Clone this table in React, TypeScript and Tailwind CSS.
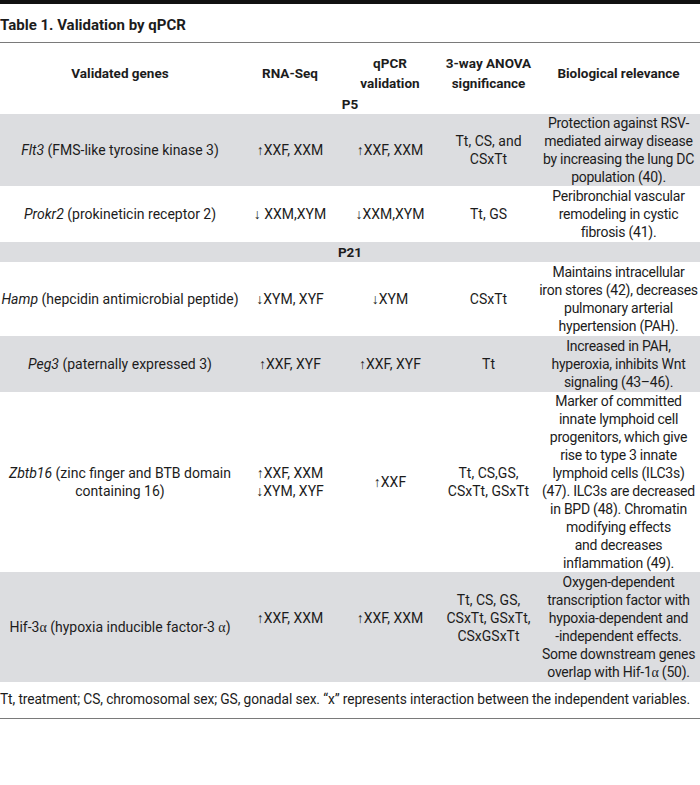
const rows: {
  kind: "row" | "group";
  gray: boolean;
  gene?: React.ReactNode;
  rna?: React.ReactNode;
  qpcr?: React.ReactNode;
  anova?: React.ReactNode;
  bio?: string[];
  label?: string;
  h?: string;
  lift?: boolean;
}[] = [
  {
    kind: "row",
    gray: true,
    h: "h-[72px]",
    gene: (
      <>
        <i>Flt3</i> (FMS-like tyrosine kinase 3)
      </>
    ),
    rna: "↑XXF, XXM",
    qpcr: "↑XXF, XXM",
    anova: (
      <>
        Tt, CS, and
        <br />
        CSxTt
      </>
    ),
    bio: ["Protection against RSV-", "mediated airway disease", "by increasing the lung DC", "population (40)."],
  },
  {
    kind: "row",
    gray: false,
    h: "h-[56px]",
    gene: (
      <>
        <i>Prokr2</i> (prokineticin receptor 2)
      </>
    ),
    rna: "↓ XXM,XYM",
    qpcr: "↓XXM,XYM",
    anova: "Tt, GS",
    bio: ["Peribronchial vascular", "remodeling in cystic", "fibrosis (41)."],
  },
  { kind: "group", gray: true, label: "P21" },
  {
    kind: "row",
    gray: false,
    h: "h-[74px]",
    gene: (
      <>
        <i>Hamp</i> (hepcidin antimicrobial peptide)
      </>
    ),
    rna: "↓XYM, XYF",
    qpcr: "↓XYM",
    anova: "CSxTt",
    bio: ["Maintains intracellular", "iron stores (42), decreases", "pulmonary arterial", "hypertension (PAH)."],
  },
  {
    kind: "row",
    gray: true,
    h: "h-[56px]",
    gene: (
      <>
        <i>Peg3</i> (paternally expressed 3)
      </>
    ),
    rna: "↑XXF, XYF",
    qpcr: "↑XXF, XYF",
    anova: "Tt",
    bio: ["Increased in PAH,", "hyperoxia, inhibits Wnt", "signaling (43–46)."],
  },
  {
    kind: "row",
    gray: false,
    h: "h-[180px]",
    gene: (
      <>
        <i>Zbtb16</i> (zinc finger and BTB domain
        <br />
        containing 16)
      </>
    ),
    rna: (
      <>
        ↑XXF, XXM
        <br />
        ↓XYM, XYF
      </>
    ),
    qpcr: "↑XXF",
    anova: (
      <>
        Tt, CS,GS,
        <br />
        CSxTt, GSxTt
      </>
    ),
    bio: [
      "Marker of committed",
      "innate lymphoid cell",
      "progenitors, which give",
      "rise to type 3 innate",
      "lymphoid cells (ILC3s)",
      "(47). ILC3s are decreased",
      "in BPD (48). Chromatin",
      "modifying effects",
      "and decreases",
      "inflammation (49).",
    ],
  },
  {
    kind: "row",
    gray: true,
    h: "h-[110px]",
    lift: true,
    gene: (
      <>
        Hif-3<span className="font-['Liberation_Serif',serif]">α</span> (hypoxia inducible factor-3{" "}
        <span className="font-['Liberation_Serif',serif]">α</span>)
      </>
    ),
    rna: "↑XXF, XXM",
    qpcr: "↑XXF, XXM",
    anova: (
      <>
        Tt, CS, GS,
        <br />
        CSxTt, GSxTt,
        <br />
        CSxGSxTt
      </>
    ),
    bio: [
      "Oxygen-dependent",
      "transcription factor with",
      "hypoxia-dependent and",
      "-independent effects.",
      "Some downstream genes",
      "overlap with Hif-1α (50).",
    ],
  },
];

const cols = "grid grid-cols-[240px_100px_100px_97px_163px]";

export default function App() {
  return (
    <div className="w-[700px] bg-white text-[#1c1c1c] font-['Roboto',sans-serif] text-[14px]">
      <div className="h-[4px] bg-[#111]" />
      <div className="pt-[12px] pb-[8px] border-b-[1.5px] border-[#7a7a7a] text-[15px] font-bold leading-[18px]">
        Table 1. Validation by qPCR
      </div>

      <div className={`${cols} items-center pt-[10px] pb-[2px] text-[13.5px] font-bold leading-[20px] text-center`}>
        <div>Validated genes</div>
        <div>RNA-Seq</div>
        <div>
          qPCR
          <br />
          validation
        </div>
        <div>
          3-way ANOVA
          <br />
          significance
        </div>
        <div>Biological relevance</div>
      </div>
      <div className="h-[19px] leading-[19px] text-center font-bold text-[13.5px]">P5</div>

      {rows.map((r, i) =>
        r.kind === "group" ? (
          <div
            key={i}
            className="h-[20px] leading-[20px] text-center font-bold text-[13.5px] bg-[#dcdde0]"
          >
            {r.label}
          </div>
        ) : (
          <div
            key={i}
            className={`${cols} ${r.h} items-center text-center leading-[18px] ${r.gray ? "bg-[#dcdde0]" : ""}`}
          >
            <div className="whitespace-nowrap">{r.gene}</div>
            <div className={`whitespace-nowrap ${r.lift ? "pb-[18px]" : ""}`}>{r.rna}</div>
            <div className={`whitespace-nowrap ${r.lift ? "pb-[18px]" : ""}`}>{r.qpcr}</div>
            <div className={`whitespace-nowrap ${r.lift ? "pb-[18px]" : ""}`}>{r.anova}</div>
            <div className="leading-[18px] tracking-[-0.25px]">
              {r.bio!.map((l) => (
                <div key={l} className="whitespace-nowrap">
                  {l.includes("α") ? (
                    <>
                      {l.split("α")[0]}
                      <span className="font-['Liberation_Serif',serif]">α</span>
                      {l.split("α")[1]}
                    </>
                  ) : (
                    l
                  )}
                </div>
              ))}
            </div>
          </div>
        )
      )}

      <div className="pt-[8px] pb-[10px] leading-[18px] border-b-[1.5px] border-[#7a7a7a] whitespace-nowrap text-[13.8px] tracking-[-0.12px]">
        Tt, treatment; CS, chromosomal sex; GS, gonadal sex. “x” represents interaction between the independent variables.
      </div>
    </div>
  );
}
